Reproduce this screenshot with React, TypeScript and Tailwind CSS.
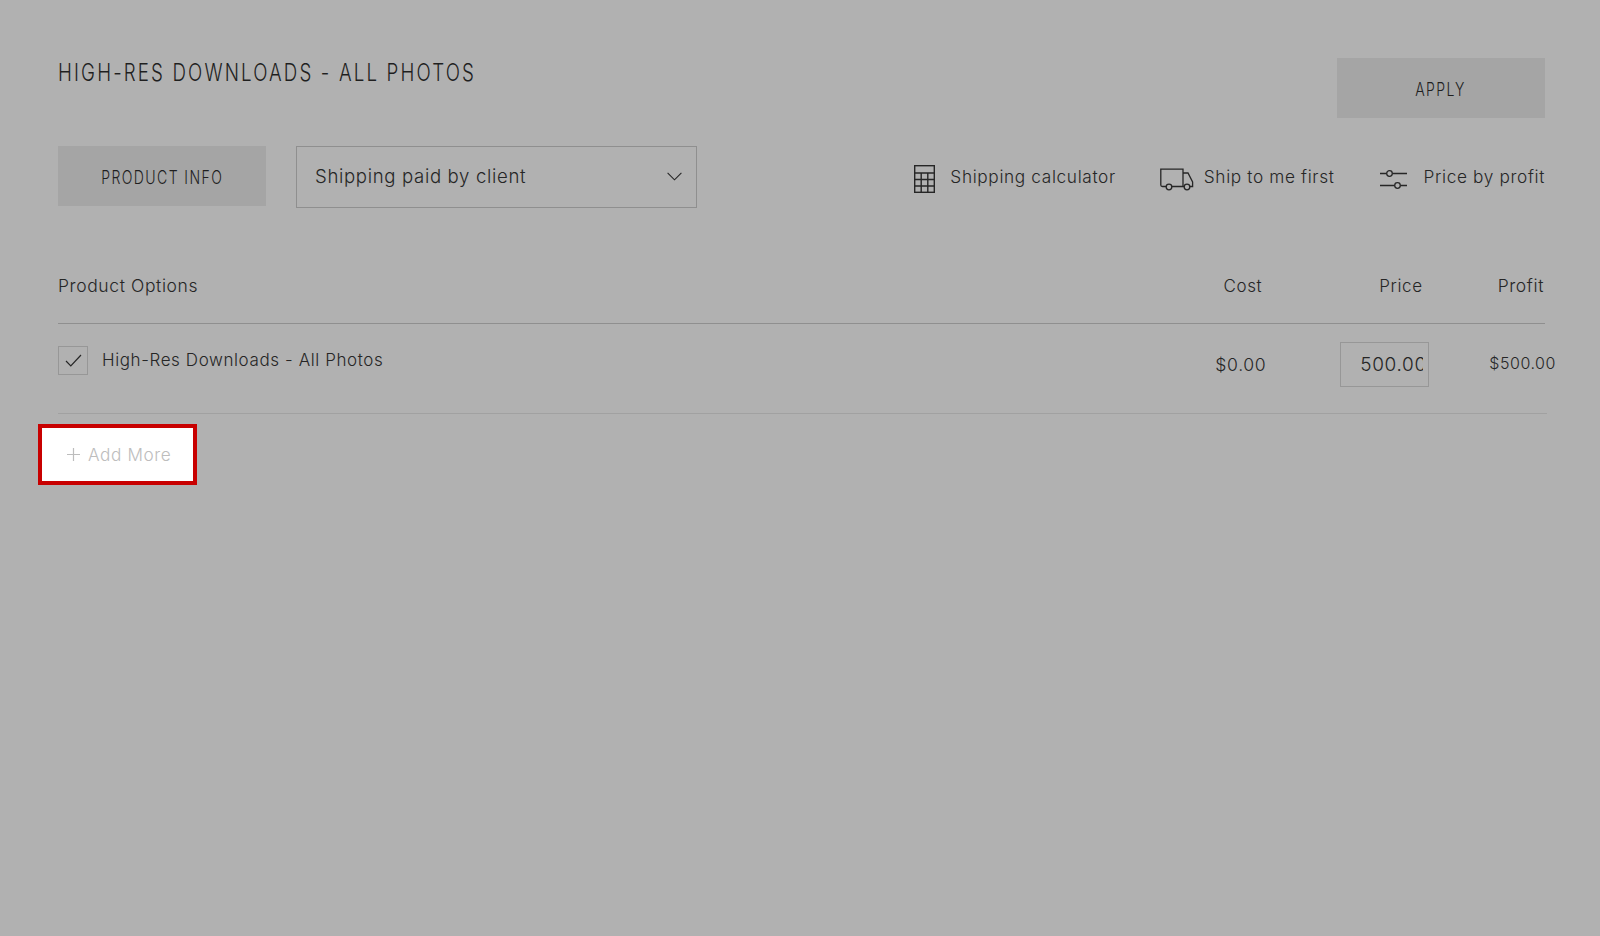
import React from "react";

const CalculatorIcon = () => (
  <svg width="21" height="28" viewBox="0 0 21 28" fill="none" stroke="#262626" strokeWidth="1.4">
    <rect x="0.7" y="0.7" width="19.6" height="26.6" />
    <path d="M0.7 8H20.3M0.7 14.5H20.3M0.7 21H20.3M7.2 8V27.3M13.8 8V27.3" />
  </svg>
);

const TruckIcon = () => (
  <svg width="34" height="23" viewBox="0 0 34 23" fill="none" stroke="#262626" strokeWidth="1.3">
    <path d="M6 18.5H2.5C1.4 18.5 0.8 17.9 0.8 17V1.2H23V18.5H12M23 5H28L32.6 14V18.5H30M23 18.5H24" />
    <circle cx="9" cy="19" r="2.8" />
    <circle cx="27" cy="19" r="2.8" />
  </svg>
);

const SlidersIcon = () => (
  <svg width="27" height="19" viewBox="0 0 27 19" fill="none" stroke="#262626" strokeWidth="1.3">
    <path d="M0 3.5H6.5M12.5 3.5H27M0 15.5H14.5M20.5 15.5H27" />
    <circle cx="9.5" cy="3.5" r="2.8" />
    <circle cx="17.5" cy="15.5" r="2.8" />
  </svg>
);

const ToolLink: React.FC<{ icon: React.ReactNode; label: string; gap: string }> = ({ icon, label, gap }) => (
  <div className={`flex items-center ${gap}`}>
    {icon}
    <span className="-translate-y-[2px] text-[17.25px] font-light tracking-[0.037em] text-[#262626]">{label}</span>
  </div>
);

export default function App() {
  return (
    <div className="min-h-screen bg-[#b1b1b1] pl-[58px] pr-[55px] pt-[58px] font-['Inter','Liberation_Sans',sans-serif] text-[#262626]">
      <div className="flex items-start justify-between">
        <h1 className="inline-block origin-left scale-x-[0.78] whitespace-nowrap text-[24px] font-light leading-[30px] tracking-[0.115em] text-[#1f1f1f]">
          HIGH-RES DOWNLOADS - ALL PHOTOS
        </h1>
        <button className="h-[60px] w-[208px] bg-[#a5a5a5] pt-[3px] text-[18px] font-light tracking-[0.1em] text-[#1f1f1f]">
          <span className="inline-block scale-x-[0.78]">APPLY</span>
        </button>
      </div>

      <div className="mt-[28px] flex items-start">
        <button className="h-[60px] w-[208px] bg-[#a5a5a5] pt-[2px] text-[18px] font-light tracking-[0.1em] text-[#1f1f1f]">
          <span className="inline-block scale-x-[0.78]">PRODUCT INFO</span>
        </button>
        <div className="ml-[30px] flex h-[62px] w-[401px] items-center justify-between border border-[#8f8f8f] pl-[18px] pr-[14px]">
          <span className="text-[18.6px] font-light tracking-[0.035em] text-[#262626]">Shipping paid by client</span>
          <svg className="mb-[2px]" width="15" height="9" viewBox="0 0 15 9" fill="none" stroke="#262626" strokeWidth="1.1">
            <path d="M0.6 0.8L7.5 7.8L14.4 0.8" />
          </svg>
        </div>
        <div className="ml-auto mt-[19px] flex items-center">
          <ToolLink icon={<CalculatorIcon />} label="Shipping calculator" gap="gap-[15px]" />
          <div className="ml-[44px]">
            <ToolLink icon={<TruckIcon />} label="Ship to me first" gap="gap-[10px]" />
          </div>
          <div className="ml-[45px]">
            <ToolLink icon={<SlidersIcon />} label="Price by profit" gap="gap-[17px]" />
          </div>
        </div>
      </div>

      <div className="mt-[68px] flex h-[48px] items-start border-b border-[#8f8f8f] text-[17.5px] font-light leading-[20px] tracking-[0.035em]">
        <span className="flex-1">Product Options</span>
        <span className="text-[17px]">Cost</span>
        <span className="ml-[117px] text-[17px]">Price</span>
        <span className="ml-[75px] mr-[1px]">Profit</span>
      </div>

      <div className="-mr-[2px] flex h-[90px] items-start border-b border-[#a1a1a1]">
        <div className="mt-[22px] flex h-[29px] w-[30px] items-center justify-center border border-[#979797]">
          <svg width="17" height="13" viewBox="0 0 17 13" fill="none" stroke="#262626" strokeWidth="1.2">
            <path d="M1 7L5.8 11.8L16 1" />
          </svg>
        </div>
        <span className="ml-[14px] mt-[24px] flex-1 text-[17px] font-light leading-[24px] tracking-[0.035em]">
          High-Res Downloads - All Photos
        </span>
        <span className="mt-[29px] text-[17.6px] font-light leading-[24px] tracking-[0.035em]">$0.00</span>
        <input
          readOnly
          value="500.00"
          className="ml-[74px] mt-[18px] h-[45px] w-[89px] border border-[#979797] bg-transparent pl-[19px] pr-[5px] text-[19px] font-light tracking-[0.035em] outline-none"
        />
        <span className="ml-[60px] mr-[-9px] mt-[27px] whitespace-nowrap text-[16px] font-light leading-[24px] tracking-[0.035em]">
          $500.00
        </span>
      </div>

      <div className="-ml-[20px] mt-[10px] flex h-[61px] w-[159px] items-center border-[4px] border-[#c80000] bg-white pl-[25px] text-[#bdbdbd]">
        <svg width="13" height="13" viewBox="0 0 13 13" fill="none" stroke="#bdbdbd" strokeWidth="1.2">
          <path d="M6.5 0V13M0 6.5H13" />
        </svg>
        <span className="ml-[8px] text-[17.2px] font-light tracking-[0.035em]">Add More</span>
      </div>
    </div>
  );
}
